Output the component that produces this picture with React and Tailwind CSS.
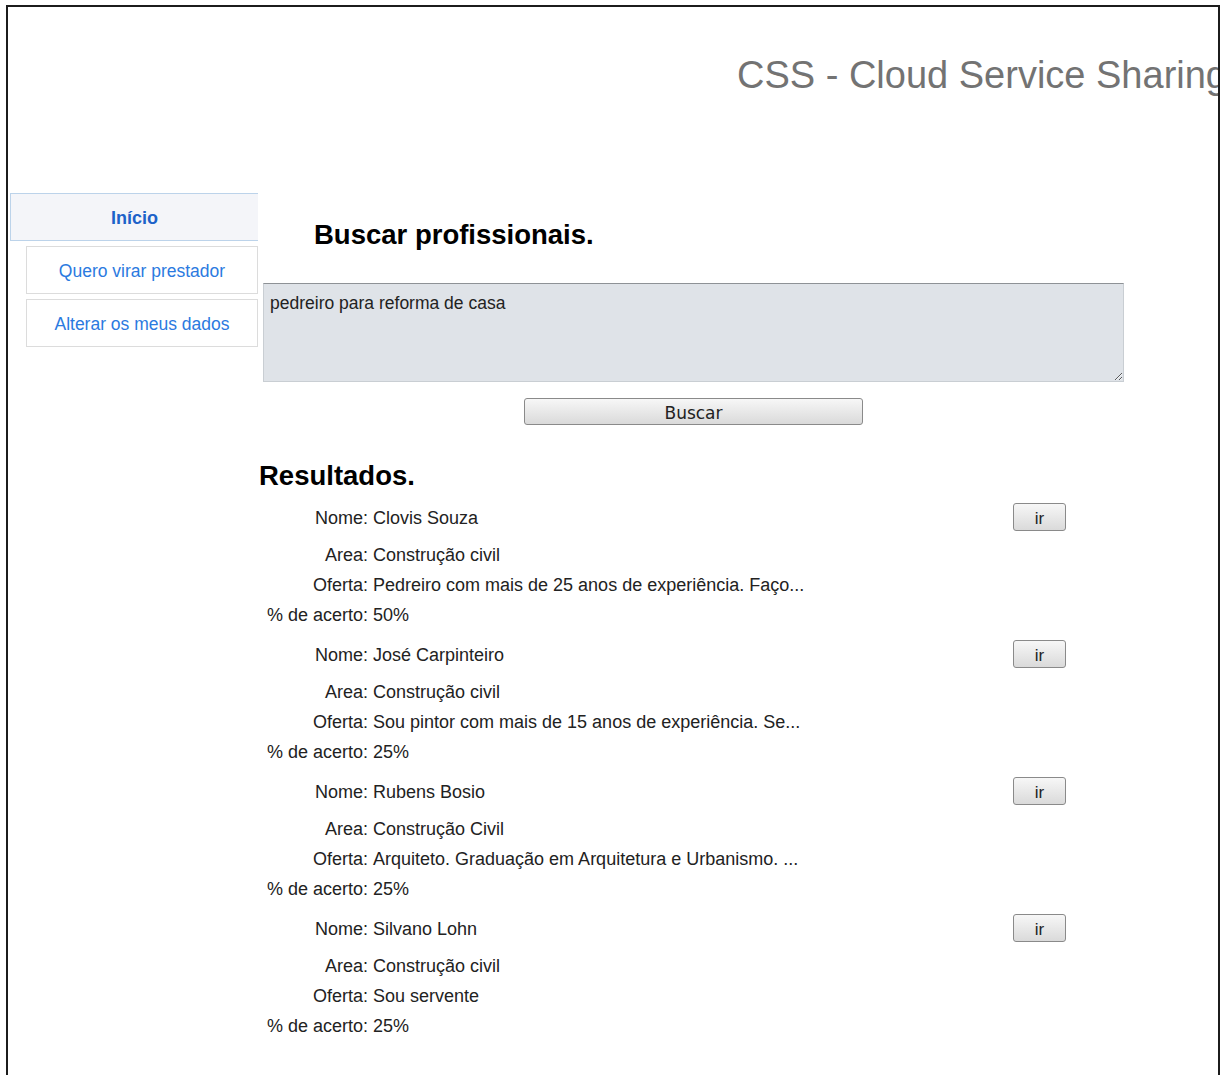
import { useState } from 'react';

const resultados = [
    { nome: 'Clovis Souza', area: 'Construção civil', oferta: 'Pedreiro com mais de 25 anos de experiência. Faço...', acerto: '50%' },
    { nome: 'José Carpinteiro', area: 'Construção civil', oferta: 'Sou pintor com mais de 15 anos de experiência. Se...', acerto: '25%' },
    { nome: 'Rubens Bosio', area: 'Construção Civil', oferta: 'Arquiteto. Graduação em Arquitetura e Urbanismo. ...', acerto: '25%' },
    { nome: 'Silvano Lohn', area: 'Construção civil', oferta: 'Sou servente', acerto: '25%' },
];

const menu = ['Quero virar prestador', 'Alterar os meus dados'];

const Linha = ({ label, children }) => (
    <div className="flex items-center h-[30px] pt-[2px]">
        <span className="w-[110px] text-right shrink-0">{label}</span>
        <span className="pl-[5px] flex-1 whitespace-nowrap">{children}</span>
    </div>
);

const App = () => {
    const [busca, setBusca] = useState('pedreiro para reforma de casa');

    return (
        <div className="min-h-screen bg-white font-['Liberation_Sans',Arial,sans-serif] text-[#222]">
            <div className="ml-[6px] mt-[5px] w-[1214px] min-h-[1075px] border-2 border-b-0 border-[#1c1c1c] overflow-hidden">
                {/* cabeçalho */}
                <div className="h-[186px] pl-[729px] pt-[49px]">
                    <h1 className="text-[38px] leading-[38px] text-[#737373] whitespace-nowrap">CSS - Cloud Service Sharing</h1>
                </div>

                <div className="flex">
                    {/* menu lateral */}
                    <nav className="w-[250px] shrink-0 pl-[2px]">
                        <div className="h-[48px] pt-[3px] flex items-center justify-center border border-r-0 border-[#bcd3ea] bg-[#f4f5f9] text-[18px] font-bold text-[#1d62c9]">
                            Início
                        </div>
                        {menu.map((item) => (
                            <div key={item} className="ml-[16px] mt-[5px] h-[48px] pt-[3px] flex items-center justify-center border border-[#dcdcdc] text-[17.5px] text-[#2b7ae0]">
                                {item}
                            </div>
                        ))}
                    </nav>

                    {/* conteúdo */}
                    <main className="flex-1">
                        <h2 className="ml-[56px] mt-[26px] text-[27.5px] leading-[32px] font-bold text-black">Buscar profissionais.</h2>

                        <div className="ml-[5px] mt-[32px] w-[861px]">
                            <textarea
                                value={busca}
                                onChange={(e) => setBusca(e.target.value)}
                                className="block w-full h-[99px] px-[6px] pt-[9px] pb-[7px] bg-[#dfe3e8] border border-[#c9ced3] border-t-[#8e9296] text-[17.5px] leading-[20px] text-[#222] font-['Liberation_Sans',Arial,sans-serif] outline-none"
                            />
                            <button className="block mx-auto mt-[16px] w-[339px] h-[27px] pt-[2px] rounded-[3px] border border-[#8a8a8a] bg-gradient-to-b from-[#f7f7f7] to-[#dadada] text-[17px] leading-[22px] font-['DejaVu_Sans',Verdana,sans-serif] text-[#222]">
                                Buscar
                            </button>
                        </div>

                        <h2 className="ml-[1px] mt-[35px] text-[27.5px] leading-[32px] font-bold text-black">Resultados.</h2>

                        <div className="mt-[3px] w-[808px] text-[18px]">
                            {resultados.map((r) => (
                                <div key={r.nome} className="mb-[3px]">
                                    <div className="flex items-center h-[44px]">
                                        <span className="w-[110px] text-right shrink-0 pt-[2px]">Nome:</span>
                                        <span className="pl-[5px] flex-1 pt-[2px]">{r.nome}</span>
                                        <button className="w-[53px] h-[28px] pt-[2px] rounded-[3px] border border-[#8a8a8a] bg-gradient-to-b from-[#f7f7f7] to-[#dadada] text-[17px] text-[#222]">
                                            ir
                                        </button>
                                    </div>
                                    <Linha label="Area:">{r.area}</Linha>
                                    <Linha label="Oferta:">{r.oferta}</Linha>
                                    <Linha label="% de acerto:">{r.acerto}</Linha>
                                </div>
                            ))}
                        </div>
                    </main>
                </div>
            </div>
        </div>
    );
};

export default App;
